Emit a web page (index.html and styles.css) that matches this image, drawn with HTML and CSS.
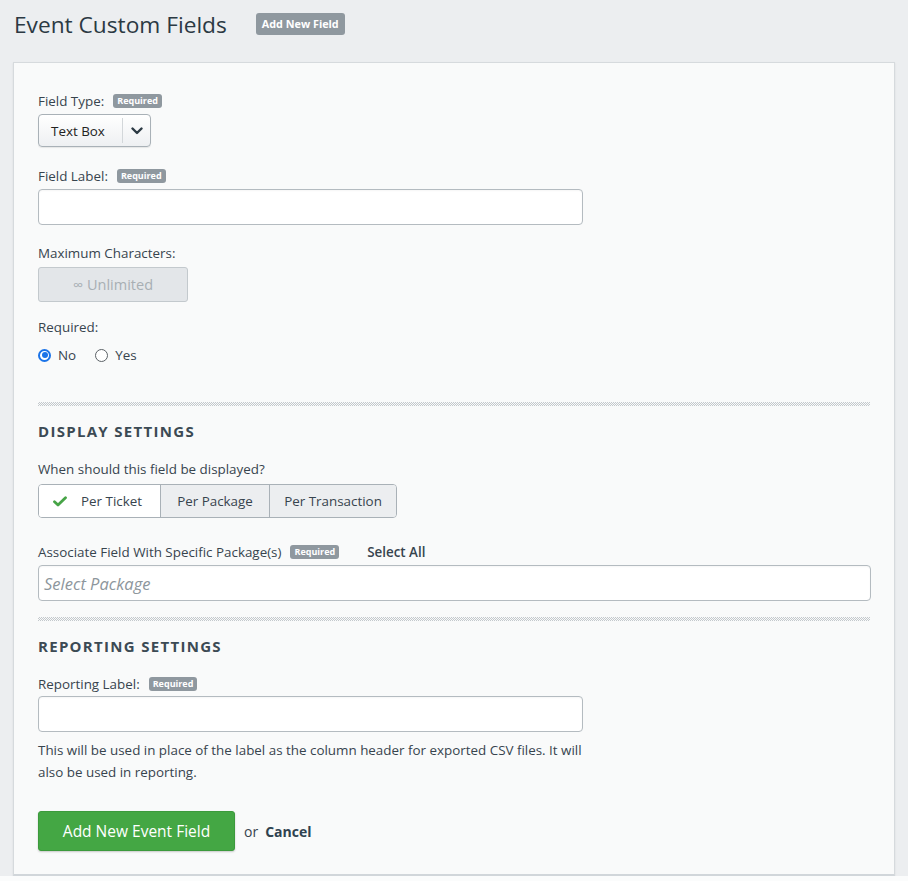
FILE: index.html
```html
<!DOCTYPE html>
<html>
<head>
<meta charset="utf-8">
<link rel="stylesheet" href="styles.css">
</head>
<body>
<div class="header">
  <h1 class="title">Event Custom Fields</h1>
  <span class="header-badge">Add New Field</span>
</div>
<div class="card">
  <div class="label-row first"><span class="label">Field Type:</span><span class="req">Required</span></div>
  <div class="select">
    <span class="select-text">Text Box</span>
    <span class="select-sep"></span>
    <span class="select-arrow"><svg width="12" height="8" viewBox="0 0 12 8"><path d="M1.5 1.5 L6 6 L10.5 1.5" fill="none" stroke="#2c3a44" stroke-width="2.4" stroke-linecap="round" stroke-linejoin="round"/></svg></span>
  </div>

  <div class="label-row gap20"><span class="label">Field Label:</span><span class="req">Required</span></div>
  <div class="input half"></div>

  <div class="label-row gap19"><span class="label">Maximum Characters:</span></div>
  <div class="disabled-box">∞ Unlimited</div>

  <div class="label-row gap16"><span class="label">Required:</span></div>
  <div class="radios">
    <span class="radio-item"><span class="radio checked"></span>No</span>
    <span class="radio-item"><span class="radio"></span>Yes</span>
  </div>

  <div class="divider d1"></div>
  <h2 class="section">DISPLAY SETTINGS</h2>

  <div class="label-row gap20"><span class="label">When should this field be displayed?</span></div>
  <div class="seg">
    <span class="seg-item active w1"><svg class="check" width="14" height="11" viewBox="0 0 14 11"><path d="M1.5 5.8 L5 9 L12.5 1.8" fill="none" stroke="#47a447" stroke-width="2.8" stroke-linecap="round" stroke-linejoin="round"/></svg>Per Ticket</span>
    <span class="seg-item w2">Per Package</span>
    <span class="seg-item w3">Per Transaction</span>
  </div>

  <div class="label-row gap25"><span class="label">Associate Field With Specific Package(s)</span><span class="req">Required</span><span class="select-all">Select All</span></div>
  <div class="input full"><span class="placeholder">Select Package</span></div>

  <div class="divider d2"></div>
  <h2 class="section">REPORTING SETTINGS</h2>

  <div class="label-row gap20"><span class="label">Reporting Label:</span><span class="req">Required</span></div>
  <div class="input half tight"></div>
  <p class="help">This will be used in place of the label as the column header for exported CSV files. It will also be used in reporting.</p>

  <div class="actions">
    <span class="btn-primary">Add New Event Field</span>
    <span class="or">or</span>
    <span class="cancel">Cancel</span>
  </div>
</div>
<div class="below"></div>
</body>
</html>
```
FILE: styles.css
```css
html, body {
  margin: 0;
  padding: 0;
}
body {
  background: #eceef0;
  font-family: "Open Sans", "Lato", sans-serif;
  color: #36444e;
  font-size: 13.4px;
}
.header {
  display: flex;
  align-items: center;
  height: 48px;
  padding-left: 14px;
  margin-bottom: 14px;
}
.title {
  margin: 0;
  font-weight: 400;
  font-size: 22.7px;
  color: #2b3943;
}
.header-badge {
  margin-left: 29px;
  background: #8f989f;
  color: #fff;
  font-size: 10.8px;
  font-weight: 700;
  border-radius: 3px;
  padding: 0 6px;
  height: 22px;
  line-height: 22px;
}
.card {
  margin-left: 13px;
  width: 882px;
  background: #f9fafa;
  border: 1px solid #d6dadd;
  border-bottom: 2px solid #d1d6da;
  box-shadow: 0 1px 2px rgba(0,0,0,0.08);
  padding: 0 24px 23px 24px;
  box-sizing: border-box;
}
.label-row {
  display: flex;
  align-items: center;
  height: 18px;
}
.label-row.first { margin-top: 29px; }
.gap20 { margin-top: 20px; }
.gap19 { margin-top: 19px; }
.gap16 { margin-top: 16px; }
.gap25 { margin-top: 25px; }
.label {
  font-size: 13.4px;
  color: #37444e;
}
.req {
  margin-left: 9px;
  background: #8f989f;
  color: #fff;
  font-size: 9px;
  font-weight: 700;
  border-radius: 3px;
  padding: 0 4px;
  height: 14px;
  line-height: 14px;
}
.select-all {
  margin-left: 28px;
  font-weight: 600;
  font-size: 13.4px;
  color: #37444e;
}
.select {
  margin-top: 4px;
  display: flex;
  align-items: center;
  width: 113px;
  height: 33px;
  box-sizing: border-box;
  border: 1px solid #a9b1b7;
  border-radius: 4px;
  background: linear-gradient(#ffffff, #eef0f2);
  box-shadow: 0 1px 1px rgba(0,0,0,0.08);
}
.select-text {
  width: 83px;
  padding-left: 12px;
  box-sizing: border-box;
  font-size: 13.4px;
  color: #222;
}
.select-sep {
  width: 1px;
  height: 25px;
  background: #d3d7da;
}
.select-arrow {
  flex: 1;
  display: flex;
  justify-content: center;
  padding-top: 1px;
}
.input {
  margin-top: 4px;
  height: 36px;
  box-sizing: border-box;
  border: 1px solid #b4bbc0;
  border-radius: 4px;
  background: #fff;
  box-shadow: inset 0 1px 2px rgba(0,0,0,0.04);
}
.input.half { width: 545px; }
.input.full { width: 833px; display: flex; align-items: center; padding-left: 5px; }
.input.tight { margin-top: 3px; }
.placeholder {
  font-style: italic;
  color: #8d969c;
  font-size: 16.5px;
}
.disabled-box {
  margin-top: 5px;
  width: 150px;
  height: 35px;
  box-sizing: border-box;
  border: 1px solid #c3c9cd;
  border-radius: 3px;
  background: #e3e6e9;
  color: #a8afb4;
  font-size: 14.5px;
  display: flex;
  align-items: center;
  justify-content: center;
}
.radios {
  margin-top: 10px;
  display: flex;
  align-items: center;
  height: 18px;
}
.radio-item {
  display: flex;
  align-items: center;
  font-size: 13.4px;
  color: #37444e;
  margin-right: 19px;
}
.radio {
  width: 13px;
  height: 13px;
  box-sizing: border-box;
  border-radius: 50%;
  border: 1px solid #5b6166;
  background: #fff;
  margin-right: 7px;
  position: relative;
}
.radio.checked {
  border: 2px solid #1a73e8;
}
.radio.checked::after {
  content: "";
  position: absolute;
  left: 1.5px;
  top: 1.5px;
  width: 6px;
  height: 6px;
  border-radius: 50%;
  background: #1a73e8;
}
.divider {
  height: 4px;
  background-image: repeating-conic-gradient(#c3c8cc 0 25%, transparent 0 50%);
  background-size: 2px 2px;
}
.d1 { margin-top: 38px; }
.d2 { margin-top: 16px; }
.section {
  margin: 16px 0 0 0;
  height: 18px;
  line-height: 18px;
  font-size: 15px;
  font-weight: 700;
  letter-spacing: 1.3px;
  color: #3c4a54;
}
.seg {
  margin-top: 6px;
  display: flex;
  width: 359px;
  height: 34px;
  box-sizing: border-box;
  border: 1px solid #a9b1b7;
  border-radius: 4px;
  overflow: hidden;
}
.seg-item {
  display: flex;
  align-items: center;
  justify-content: center;
  background: #eceef0;
  font-size: 13.4px;
  color: #37444e;
  border-left: 1px solid #a9b1b7;
  box-sizing: border-box;
}
.seg-item.active {
  background: #fff;
  border-left: none;
}
.w1 { width: 121px; }
.w2 { width: 109px; }
.w3 { flex: 1; }
.check { margin-right: 14px; margin-left: -4px; }
.help {
  margin: 7px 0 0 0;
  width: 550px;
  line-height: 22px;
  font-size: 13.4px;
  color: #37444e;
}
.actions {
  margin-top: 28px;
  display: flex;
  align-items: center;
}
.btn-primary {
  width: 197px;
  height: 40px;
  box-sizing: border-box;
  background: #44a744;
  border: 1px solid #3c9a3c;
  border-radius: 3px;
  color: #fff;
  font-size: 15.5px;
  display: flex;
  align-items: center;
  justify-content: center;
  box-shadow: 0 1px 2px rgba(0,0,0,0.2);
}
.or {
  margin-left: 9px;
  font-size: 14px;
  color: #37444e;
}
.cancel {
  margin-left: 7px;
  font-size: 14px;
  font-weight: 700;
  color: #2f4250;
}
.below {
  height: 20px;
  background: #fbfcfc;
}
```
